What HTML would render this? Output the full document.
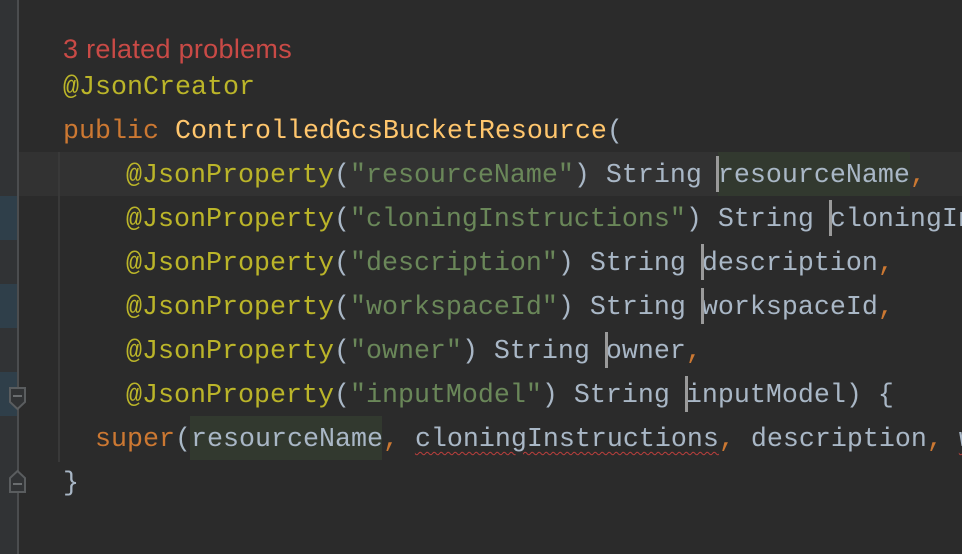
<!DOCTYPE html>
<html><head><meta charset="utf-8"><style>
*{margin:0;padding:0}
html,body{width:962px;height:554px;overflow:hidden}
body{background:#2b2b2b;position:relative;font-family:"Liberation Mono",monospace;font-size:26.67px;color:#a9b7c6}
.wrap{position:absolute;left:0;top:0;width:962px;height:554px;overflow:hidden}
.g{position:absolute;left:0;top:0;width:17px;height:554px;background:#313335}
.sep{position:absolute;left:17px;top:0;width:2px;height:554px;background:#4b4d4f}
.chg{position:absolute;left:0;width:17px;height:44px;background:#2f3f4a}
.cur{position:absolute;left:19px;right:0;top:152px;height:44px;background:#323232}
.guide{position:absolute;left:58px;top:152px;width:2px;height:310px;background:#393939}
.l{position:absolute;height:44px;line-height:48px;white-space:pre}
.a{color:#bbb529}.s{color:#6a8759}.k{color:#cc7832}.m{color:#ffc66d}
.hbg{position:absolute;height:44px;background:#32392f}
.c{position:absolute;width:3px;height:36px;background:#9a9a9a}
.w{text-decoration:underline wavy #bc3f3c;text-decoration-thickness:1px;text-underline-offset:5px}
</style></head><body><div class="wrap">
<div class="g"></div>
<div class="chg" style="top:196px"></div>
<div class="chg" style="top:284px"></div>
<div class="chg" style="top:372px"></div>
<div class="sep"></div>
<div class="cur"></div>
<div class="guide"></div>
<div class="hbg" style="left:718px;top:152px;width:192px"></div>
<div class="hbg" style="left:190px;top:416px;width:192px"></div>
<svg style="position:absolute;left:8px;top:386px" width="20" height="26"><path d="M2 2H17V16L9.5 23L2 16Z" fill="#313335" stroke="#5a5d5f" stroke-width="2"/><path d="M5 10H14" stroke="#6a6d6f" stroke-width="2"/></svg>
<svg style="position:absolute;left:8px;top:468px" width="20" height="26"><path d="M2 24H17V10L9.5 3L2 10Z" fill="#313335" stroke="#5a5d5f" stroke-width="2"/><path d="M5 16H14" stroke="#6a6d6f" stroke-width="2"/></svg>
<div class="l" style="left:63px;top:27px;font-family:'Liberation Sans',sans-serif;font-size:27px;letter-spacing:0.3px;line-height:44px;color:#c94a46">3 related problems</div>
<div class="l" style="left:63px;top:64px"><span class="a">@JsonCreator</span></div>
<div class="l" style="left:63px;top:108px"><span class="k">public </span><span class="m">ControlledGcsBucketResource</span>(</div>
<div class="l" style="left:126px;top:152px"><span class="a">@JsonProperty</span>(<span class="s">"resourceName"</span>) String resourceName<span class="k">,</span></div>
<div class="l" style="left:126px;top:196px"><span class="a">@JsonProperty</span>(<span class="s">"cloningInstructions"</span>) String cloningInstructions<span class="k">,</span></div>
<div class="l" style="left:126px;top:240px"><span class="a">@JsonProperty</span>(<span class="s">"description"</span>) String description<span class="k">,</span></div>
<div class="l" style="left:126px;top:284px"><span class="a">@JsonProperty</span>(<span class="s">"workspaceId"</span>) String workspaceId<span class="k">,</span></div>
<div class="l" style="left:126px;top:328px"><span class="a">@JsonProperty</span>(<span class="s">"owner"</span>) String owner<span class="k">,</span></div>
<div class="l" style="left:126px;top:372px"><span class="a">@JsonProperty</span>(<span class="s">"inputModel"</span>) String inputModel) {</div>
<div class="l" style="left:95px;top:416px"><span class="k">super</span>(resourceName<span class="k">, </span><span class="w">cloningInstructions</span><span class="k">, </span>description<span class="k">, </span><span class="w">w</span></div>
<div class="l" style="left:63px;top:460px">}</div>
<div class="c" style="left:716px;top:156px"></div>
<div class="c" style="left:829px;top:200px"></div>
<div class="c" style="left:701px;top:244px"></div>
<div class="c" style="left:701px;top:288px"></div>
<div class="c" style="left:605px;top:332px"></div>
<div class="c" style="left:685px;top:376px"></div>
</div></body></html>
